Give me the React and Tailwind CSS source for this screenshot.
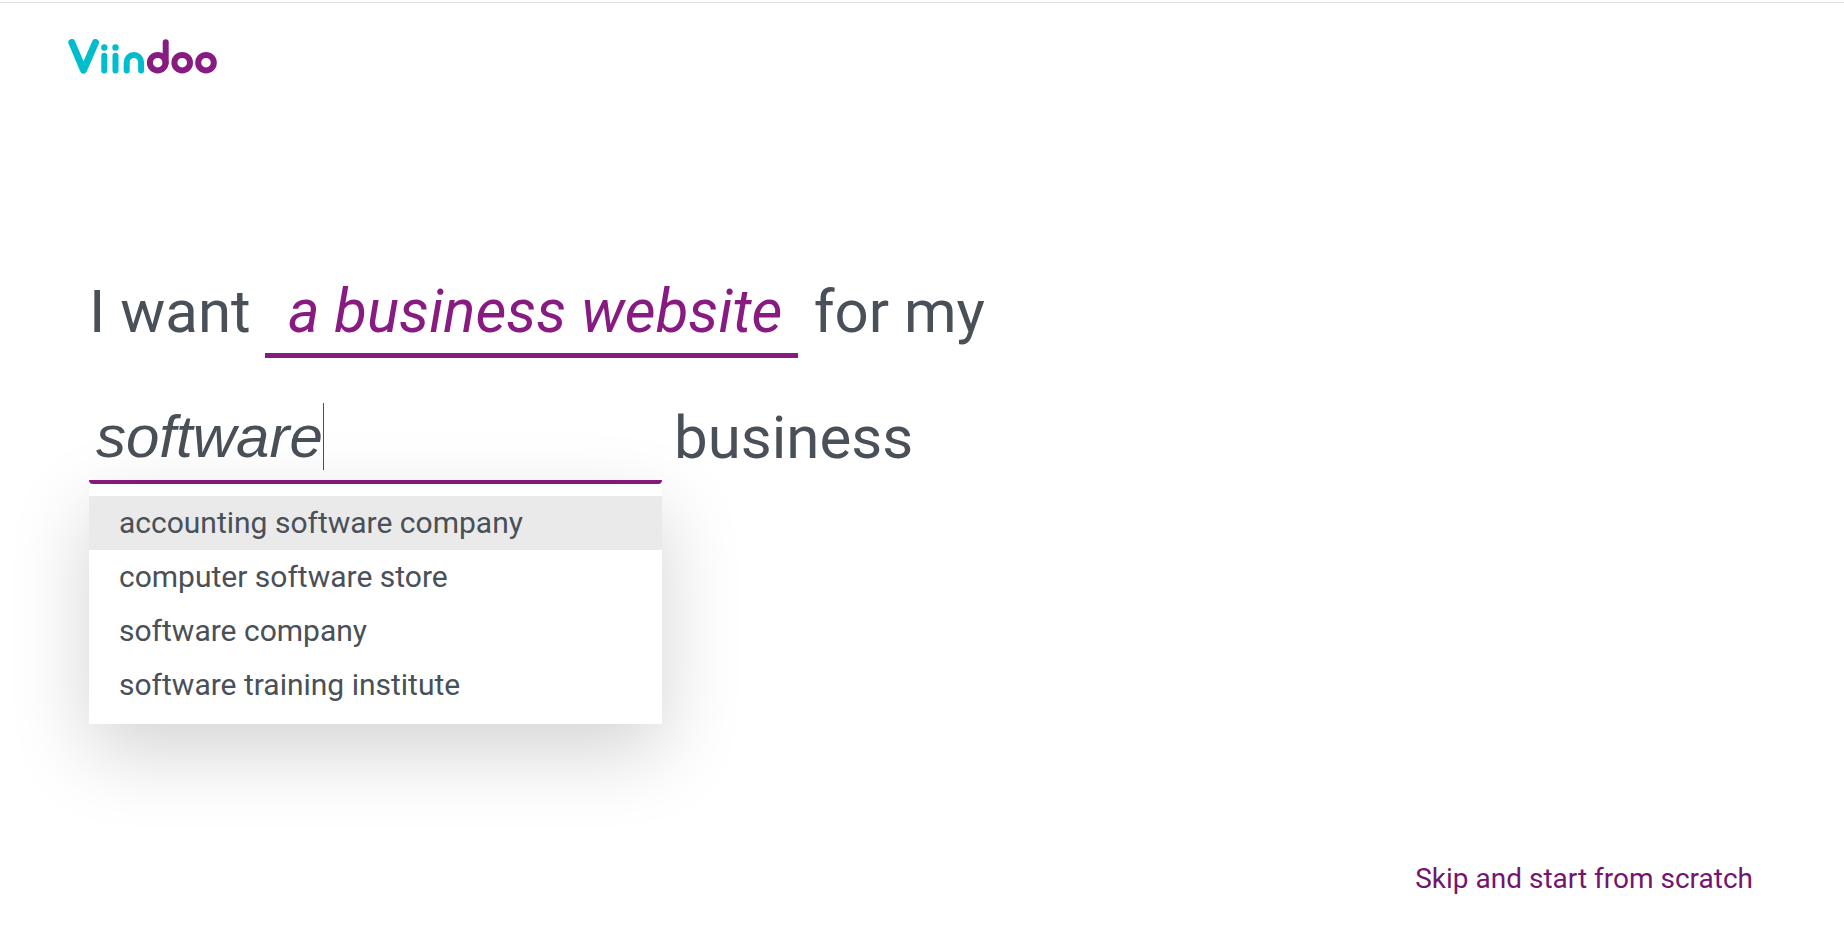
import { useState } from 'react';

const suggestions = [
  'accounting software company',
  'computer software store',
  'software company',
  'software training institute',
];

function Logo() {
  return (
    <svg width="150" height="36" viewBox="0 0 150 36" fill="none" strokeLinecap="round" strokeLinejoin="round" role="img" aria-label="Viindoo">
      <g stroke="#00bdcd" strokeWidth="6">
        <path d="M3.8 3.5 15.5 31.2 27.5 3.5" strokeWidth="7" />
        <path d="M36.3 16.8V31.5M47.5 16.8V31.5" />
        <path d="M58.7 31.5V23.2a7.2 7.2 0 0 1 14.4 0V31.5" />
      </g>
      <circle cx="36.3" cy="8.5" r="3.2" fill="#00bdcd" />
      <circle cx="47.5" cy="8.5" r="3.2" fill="#00bdcd" />
      <g stroke="#871b82" strokeWidth="6">
        <circle cx="89.7" cy="23.7" r="7.8" />
        <path d="M97.7 3.2V24" />
        <circle cx="114.2" cy="23.7" r="7.8" />
        <circle cx="138" cy="23.7" r="7.8" />
      </g>
    </svg>
  );
}

function App() {
  const [industry, setIndustry] = useState('software');
  const [active, setActive] = useState(0);

  return (
    <div className="flex min-h-screen flex-col bg-white font-['Roboto',sans-serif] text-[#495057]">
      <div className="h-[3px] border-b border-[#dee2e6]"></div>
      <header className="px-[68px] pt-9">
        <a href="#home" className="block w-fit">
          <Logo />
        </a>
      </header>

      <main className="flex-1 px-[89px] pt-[197px] text-[60px]">
        <div className="flex items-start leading-[80px]">
          <span>I want</span>
          <button type="button" className="ml-[14px] mr-4 min-w-[533px] border-b-5 border-[#871b82] pb-px pl-4 pr-2 italic text-[#871b82]">
            a business website
          </button>
          <span>for my</span>
        </div>

        <div className="mt-10 flex items-start gap-3 leading-[80px]">
          <div className="relative w-[573px]">
            <input
              type="text"
              aria-label="Industry"
              value={industry}
              onChange={(e) => setIndustry(e.target.value)}
              className="block h-[86px] w-full rounded border-b-4 border-[#871b82] px-[7px] pb-[6px] font-['Liberation_Sans',sans-serif] italic caret-transparent outline-none"
            />
            {/* text cursor, sits right after the typed value */}
            <div className="pointer-events-none absolute inset-x-[7px] top-[5px] flex h-[67px] font-['Liberation_Sans',sans-serif] italic">
              <span className="border-r border-[#495057] text-transparent" aria-hidden="true">{industry}</span>
            </div>
            <ul className="absolute inset-x-0 top-full bg-white py-3 text-[30px] leading-[54px] shadow-[0_27px_80px_rgba(0,0,0,0.175)]">
              {suggestions.map((item, idx) => (
                <li key={item}>
                  <button
                    type="button"
                    onMouseEnter={() => setActive(idx)}
                    onClick={() => setIndustry(item)}
                    className={`block w-full px-[30px] text-left ${idx === active ? 'bg-[#eaeaea]' : ''}`}
                  >
                    {item}
                  </button>
                </li>
              ))}
            </ul>
          </div>
          <span>business</span>
        </div>
      </main>

      <footer className="flex justify-end px-[91px] pb-[33px]">
        <a href="#skip" className="text-[28px] leading-[42px] text-[#73166f]">Skip and start from scratch</a>
      </footer>
    </div>
  );
}

export default App;
